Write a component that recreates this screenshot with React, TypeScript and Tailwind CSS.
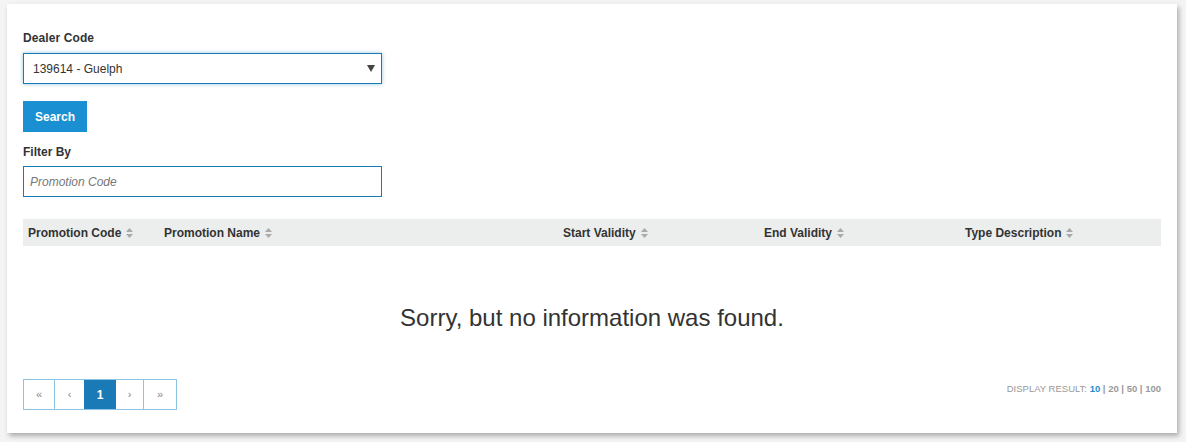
import React from "react";

const Sort = () => (
  <svg width="7" height="10" viewBox="0 0 7 10" className="ml-[5px] inline-block" fill="#a9a9a9">
    <path d="M3.5 0L7 4H0z" />
    <path d="M3.5 10L0 6h7z" />
  </svg>
);

export default function App() {
  const cols = [
    { label: "Promotion Code", w: "w-[136px]" },
    { label: "Promotion Name", w: "w-[399px]" },
    { label: "Start Validity", w: "w-[201px]" },
    { label: "End Validity", w: "w-[201px]" },
    { label: "Type Description", w: "flex-1" },
  ];
  return (
    <div
      className="w-[1186px] h-[442px] bg-[#f4f4f4] pt-[4px] pl-[7px]"
      style={{ fontFamily: '"Liberation Sans", Arial, sans-serif' }}
    >
      <div className="w-[1170px] h-[429px] bg-white shadow-[2px_3px_5px_rgba(0,0,0,0.3)] px-[16px] pt-[27px]">
        <div className="text-[12px] font-bold text-[#333] leading-[14px] tracking-[0.1px]">Dealer Code</div>
        <div className="mt-[8px] w-[359px] h-[31px] border border-[#1a7ab5] shadow-[0_0_4px_rgba(26,122,181,0.45)] flex items-center justify-between pl-[9px] pr-[6px] text-[12px] text-[#333]">
          <span>139614 - Guelph</span>
          <svg width="8" height="7" viewBox="0 0 8 7" fill="#444">
            <path d="M0 0h8L4 7z" />
          </svg>
        </div>
        <button className="mt-[17px] w-[64px] h-[31px] bg-[#1a8fd2] text-white text-[12px] font-bold flex items-center justify-center">
          Search
        </button>
        <div className="mt-[13px] text-[12px] font-bold text-[#333] leading-[14px]">Filter By</div>
        <div className="mt-[7px] w-[359px] h-[31px] border border-[#1a7ab5] flex items-center pl-[6px] text-[12px] italic text-[#777]">
          Promotion Code
        </div>
        <div className="mt-[22px] h-[27px] bg-[#eceeee] flex items-center pl-[5px] text-[12px] font-bold text-[#333]">
          {cols.map((c) => (
            <div key={c.label} className={`${c.w} flex items-center`}>
              <span>{c.label}</span>
              <Sort />
            </div>
          ))}
        </div>
        <div className="h-[133px] flex items-center justify-center text-[24px] text-[#333] pt-[10px]">
          Sorry, but no information was found.
        </div>
        <div className="flex items-center justify-between">
          <div className="flex h-[31px] border border-[#8dc4e6] text-[11px] text-[#888]">
            <div className="w-[31px] flex items-center justify-center border-r border-[#8dc4e6]">«</div>
            <div className="w-[29px] flex items-center justify-center">‹</div>
            <div className="w-[32px] flex items-center justify-center bg-[#1a7ab5] text-white font-bold text-[12px]">1</div>
            <div className="w-[28px] flex items-center justify-center border-r border-[#8dc4e6]">›</div>
            <div className="w-[32px] flex items-center justify-center">»</div>
          </div>
          <div className="text-[9.5px] text-[#999] -mt-[10px]">
            DISPLAY RESULT: <span className="font-bold text-[#1a8fd2]">10</span>
            <span className="font-bold"> | 20 | 50 | 100</span>
          </div>
        </div>
      </div>
    </div>
  );
}
